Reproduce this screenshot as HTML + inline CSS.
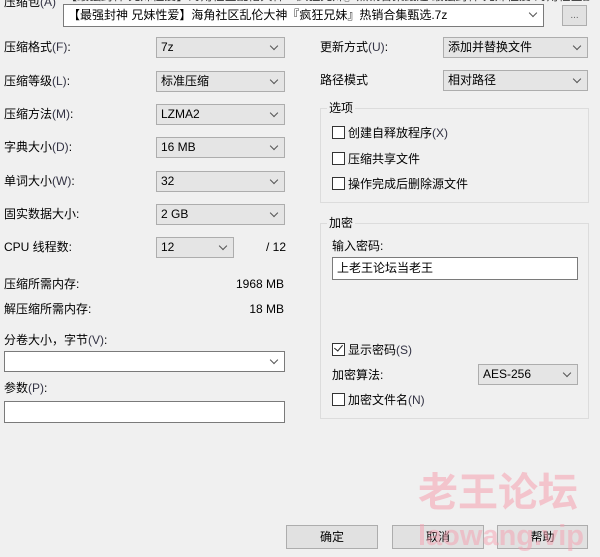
<!DOCTYPE html>
<html><head><meta charset="utf-8"><style>
html,body{overflow:hidden}
body{margin:0;width:600px;height:557px;background:#f0f0f0;position:relative;overflow:hidden;font-family:"Liberation Sans","Microsoft YaHei","Noto Sans CJK SC",sans-serif;font-size:12px;color:#000}
.a{position:absolute;white-space:nowrap;line-height:14px}
.c{position:absolute;box-sizing:border-box;height:21px;background:#e5e5e5;border:1px solid #adadad;padding:2px 0 0 4px;line-height:15px;white-space:nowrap;overflow:hidden}
.c.w{background:#fff;border-color:#7a7a7a}
.c::after{content:"";position:absolute;right:7px;top:5px;width:5px;height:5px;border-right:1px solid #555;border-bottom:1px solid #555;transform:rotate(45deg)}
.t{position:absolute;box-sizing:border-box;background:#fff;border:1px solid #7a7a7a}
.g{position:absolute;border:1px solid #dcdcdc;box-sizing:border-box}
.gt{position:absolute;background:#f0f0f0;padding:0 2px;line-height:14px}
.cb{position:absolute;white-space:nowrap;line-height:14px;padding-left:16px}
.cb::before{content:"";position:absolute;left:0;top:0;width:11px;height:11px;border:1px solid #333;background:#fff}
.b{position:absolute;box-sizing:border-box;height:24px;border:1px solid #adadad;background:#e1e1e1;text-align:center;line-height:22px}
.u{color:#334}
</style></head><body>
<div class="a" style="left:65px;top:-11px;width:525px;overflow:hidden;color:#333">【最强封神 兄妹性爱】海角社区乱伦大神『疯狂兄妹』热销合集甄选 最强封神 兄妹性爱 海角社区乱伦大神 疯狂兄妹 热销合集甄选</div>
<div class="a" style="left:4px;top:-5px">压缩包<span class="u">(A)</span></div>
<div class="c w" style="left:63px;top:4px;width:481px;height:23px;padding-top:3px">【最强封神 兄妹性爱】海角社区乱伦大神『疯狂兄妹』热销合集甄选.7z</div>
<div class="b" style="left:562px;top:5px;width:25px;height:21px;line-height:19px;font-size:10px;color:#666">...</div>

<div class="a" style="left:4px;top:40px">压缩格式<span class="u">(F)</span>:</div>
<div class="c" style="left:156px;top:37px;width:129px">7z</div>
<div class="a" style="left:4px;top:74px">压缩等级<span class="u">(L)</span>:</div>
<div class="c" style="left:156px;top:71px;width:129px">标准压缩</div>
<div class="a" style="left:4px;top:107px">压缩方法<span class="u">(M)</span>:</div>
<div class="c" style="left:156px;top:104px;width:129px">LZMA2</div>
<div class="a" style="left:4px;top:140px">字典大小<span class="u">(D)</span>:</div>
<div class="c" style="left:156px;top:137px;width:129px">16 MB</div>
<div class="a" style="left:4px;top:174px">单词大小<span class="u">(W)</span>:</div>
<div class="c" style="left:156px;top:171px;width:129px">32</div>
<div class="a" style="left:4px;top:207px">固实数据大小:</div>
<div class="c" style="left:156px;top:204px;width:129px">2 GB</div>
<div class="a" style="left:4px;top:240px">CPU 线程数:</div>
<div class="c" style="left:156px;top:237px;width:78px">12</div>
<div class="a" style="left:266px;top:240px">/ 12</div>
<div class="a" style="left:4px;top:277px">压缩所需内存:</div>
<div class="a" style="left:234px;top:277px;width:50px;text-align:right">1968 MB</div>
<div class="a" style="left:4px;top:302px">解压缩所需内存:</div>
<div class="a" style="left:234px;top:302px;width:50px;text-align:right">18 MB</div>
<div class="a" style="left:4px;top:333px">分卷大小，字节<span class="u">(V)</span>:</div>
<div class="c w" style="left:4px;top:351px;width:281px"></div>
<div class="a" style="left:4px;top:381px">参数<span class="u">(P)</span>:</div>
<div class="t" style="left:4px;top:401px;width:281px;height:22px"></div>

<div class="a" style="left:320px;top:40px">更新方式<span class="u">(U)</span>:</div>
<div class="c" style="left:443px;top:37px;width:145px">添加并替换文件</div>
<div class="a" style="left:320px;top:73px">路径模式</div>
<div class="c" style="left:443px;top:70px;width:145px">相对路径</div>

<div class="g" style="left:320px;top:108px;width:269px;height:95px"></div>
<div class="gt" style="left:327px;top:101px">选项</div>
<div class="cb" style="left:332px;top:126px">创建自释放程序<span class="u">(X)</span></div>
<div class="cb" style="left:332px;top:152px">压缩共享文件</div>
<div class="cb" style="left:332px;top:177px">操作完成后删除源文件</div>

<div class="g" style="left:320px;top:223px;width:269px;height:196px"></div>
<div class="gt" style="left:327px;top:216px">加密</div>
<div class="a" style="left:332px;top:239px">输入密码:</div>
<div class="t" style="left:332px;top:257px;width:246px;height:23px;padding:3px 4px;line-height:15px">上老王论坛当老王</div>
<div class="cb" style="left:332px;top:343px">显示密码<span class="u">(S)</span></div>
<div style="position:absolute;left:336px;top:343px;width:4px;height:7px;border-right:1.5px solid #222;border-bottom:1.5px solid #222;transform:rotate(40deg)"></div>
<div class="a" style="left:332px;top:368px">加密算法:</div>
<div class="c" style="left:478px;top:364px;width:100px">AES-256</div>
<div class="cb" style="left:332px;top:393px">加密文件名<span class="u">(N)</span></div>

<div class="a" style="left:418px;top:470px;font-size:40px;line-height:46px;color:rgba(245,160,175,0.55);font-weight:bold">老王论坛</div>
<div class="b" style="left:286px;top:525px;width:92px">确定</div>
<div class="b" style="left:392px;top:525px;width:92px">取消</div>
<div class="b" style="left:497px;top:525px;width:91px">帮助</div>
<div class="a" style="left:418px;top:518px;font-size:29px;line-height:36px;color:rgba(245,160,175,0.5);font-weight:bold">laowang.vip</div>
</body></html>
